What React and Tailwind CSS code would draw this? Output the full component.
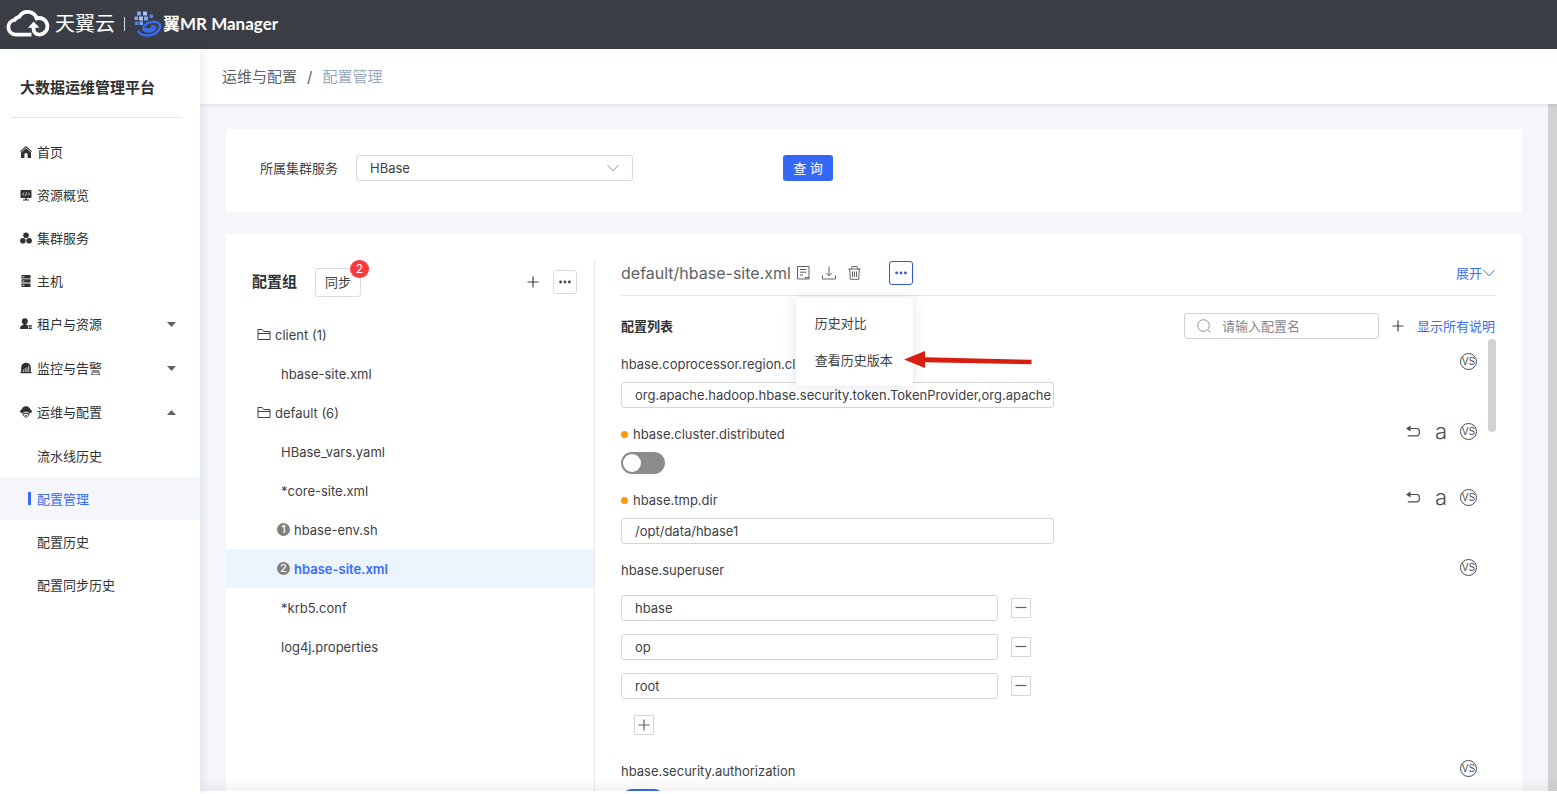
import React, { useState } from "react";
import clsx from "clsx";

const menu = [
  { id: "home", label: "首页", icon: HomeIcon },
  { id: "overview", label: "资源概览", icon: OverviewIcon },
  { id: "cluster", label: "集群服务", icon: ClusterIcon },
  { id: "host", label: "主机", icon: HostIcon },
  { id: "tenant", label: "租户与资源", icon: TenantIcon, children: [] },
  { id: "monitor", label: "监控与告警", icon: MonitorIcon, children: [] },
  {
    id: "ops",
    label: "运维与配置",
    icon: OpsIcon,
    open: true,
    children: ["流水线历史", "配置管理", "配置历史", "配置同步历史"],
  },
];

const groups = [
  { name: "client (1)", files: [{ name: "hbase-site.xml" }] },
  {
    name: "default (6)",
    files: [
      { name: "HBase_vars.yaml" },
      { name: "*core-site.xml" },
      { name: "hbase-env.sh", changes: 1 },
      { name: "hbase-site.xml", changes: 2, active: true },
      { name: "*krb5.conf" },
      { name: "log4j.properties" },
    ],
  },
];

function HomeIcon() {
  return (
    <svg width="12" height="12" viewBox="0 0 12 12" fill="currentColor">
      <path d="M6 0 0 5.2l.7.9L6 1.6l5.3 4.5.7-.9z" />
      <path d="M6 2.3 1 6.6V12h3.4V8.6a1.6 1.6 0 0 1 3.2 0V12H11V6.6z" />
    </svg>
  );
}

function OverviewIcon() {
  return (
    <svg width="12" height="12" viewBox="0 0 12 12" fill="currentColor">
      <rect x="0.5" y="1" width="11" height="8" rx="1" />
      <path d="M5.3 9h1.4v1.6H5.3zM3 10.4h6v1H3z" />
      <path
        d="M3.8 3.6 2.5 5l1.3 1.4M8.2 3.6 9.5 5 8.2 6.4M6.6 3.3 5.4 6.7"
        fill="none"
        stroke="#fff"
        strokeWidth="0.8"
      />
    </svg>
  );
}

function ClusterIcon() {
  return (
    <svg width="12" height="12" viewBox="0 0 12 12" fill="currentColor">
      <circle cx="6" cy="3.3" r="2.8" />
      <circle cx="2.9" cy="8.7" r="2.8" />
      <circle cx="9.1" cy="8.7" r="2.8" />
    </svg>
  );
}

function HostIcon() {
  return (
    <svg width="12" height="12" viewBox="0 0 12 12" fill="currentColor">
      <path d="M1.5 0h9v3.4h-9zM1.5 4.2h9v3.4h-9zM1.5 8.4h9V12h-9z" />
      <path d="M2.6 1.3h1.8v.9H2.6zM2.6 5.5h1.8v.9H2.6zM2.6 9.8h1.8v.9H2.6z" fill="#fff" />
    </svg>
  );
}

function TenantIcon() {
  return (
    <svg width="12" height="12" viewBox="0 0 12 12" fill="currentColor">
      <circle cx="4.8" cy="3.3" r="3" />
      <path d="M3.4 5h2.8v1.6L8 7.6V11H.2V9c0-1.2 3.2-1.6 3.2-2.4z" />
      <path d="M8.6 7.2h3.2v1.6H8.6zM8.6 9.4h3.2V11H8.6z" />
    </svg>
  );
}

function MonitorIcon() {
  return (
    <svg width="12" height="12" viewBox="0 0 12 12" fill="currentColor">
      <path d="M1.2 10V5.5a4.8 4.8 0 0 1 9.6 0V10h.8v1.2H.4V10z" />
      <path
        d="M3.6 10V7.5M5.3 10V6.3M7 10V5.3M8.7 10V3.8"
        fill="none"
        stroke="#fff"
        strokeWidth="0.7"
      />
    </svg>
  );
}

function OpsIcon() {
  return (
    <svg width="12" height="12" viewBox="0 0 12 12">
      <path
        d="M6 .3c2.5 0 4 1.5 4.3 3.2 1 .2 1.6.9 1.6 1.8S11.2 7 10.2 7H1.8C.8 7 .1 6.2.1 5.3s.6-1.6 1.6-1.8C2 1.8 3.5.3 6 .3z"
        fill="currentColor"
      />
      <path
        d="M2.8 6.2c0 3 1.2 5 3.2 5s3.2-2 3.2-5C8.2 4.9 3.8 4.9 2.8 6.2z"
        fill="#fff"
        stroke="currentColor"
        strokeWidth="0.9"
      />
      <path d="M3.3 6.8h5.4v1.4H7.2L6 7.5l-1.2.7H3.3zM4.8 9.3h2.4v.8H4.8z" fill="currentColor" />
    </svg>
  );
}

function CloudLogo() {
  return (
    <svg width="44" height="28" viewBox="0 0 44 28" fill="none" stroke="#fff" strokeWidth="3.8">
      <path d="M25.5 24.6H9.5A7.4 7.4 0 0 1 8.6 9.9 6.6 6.6 0 0 1 13.3 6.8 9.5 9.5 0 0 1 30.6 8.4 8.3 8.3 0 1 1 33.6 24.6c-3.6 0-6-2-6-5.3V17" />
      <path d="m22 17.8 5.7-6.3 5.7 6.3z" fill="#fff" stroke="none" />
    </svg>
  );
}

function WingLogo() {
  return (
    <svg width="28" height="26" viewBox="0 0 28 26">
      <g fill="#7ea6f8">
        <rect x="3" y="0.5" width="4" height="4" />
        <rect x="9" y="0.5" width="4" height="4" fill="#a9c4ff" />
        <rect x="0.5" y="5.5" width="3.5" height="3.5" />
        <rect x="5" y="5.5" width="4" height="4" fill="#a9c4ff" />
        <rect x="10" y="5.5" width="4" height="4" />
        <rect x="15.5" y="3.5" width="3.5" height="3.5" fill="#4f82f6" />
        <rect x="1" y="10.5" width="3.5" height="3.5" fill="#4f82f6" />
        <rect x="5.5" y="10.5" width="3.5" height="3.5" />
      </g>
      <g fill="none" stroke="#3a6cf3" strokeLinecap="round">
        <path
          d="M4.5 20.5c2.5 4.500 10.500 5.200 16 2.200 6-3.300 7.500-9 3-11.200-4.500-2.100-13 .5-14 5.200-.8 4 6 5 10 2.300 3-2 1.500-4.200-1.500-3.700"
          strokeWidth="2.4"
        />
        <path d="M12.5 18.2c1.500 1.200 4.500.6 5.500-1" strokeWidth="2.8" />
      </g>
    </svg>
  );
}

const ChevronDown = ({ size = 12, className }) => (
  <svg width={size} height={size} viewBox="0 0 12 12" fill="none" stroke="currentColor" className={className}>
    <path d="M.5 3 6 8.8 11.5 3" />
  </svg>
);

const Plus = () => (
  <svg width="12" height="12" viewBox="0 0 12 12" stroke="currentColor" strokeWidth="1.2">
    <path d="M6 .5v11M.5 6h11" />
  </svg>
);

const Minus = () => (
  <svg width="12" height="12" viewBox="0 0 12 12" stroke="currentColor" strokeWidth="1.2">
    <path d="M.5 5.5h11" />
  </svg>
);

const Dots = () => (
  <svg width="12" height="12" viewBox="0 0 12 12" fill="currentColor">
    <circle cx="1.6" cy="6" r="1.4" />
    <circle cx="6" cy="6" r="1.4" />
    <circle cx="10.4" cy="6" r="1.4" />
  </svg>
);

const FolderIcon = () => (
  <svg width="14" height="13" viewBox="0 0 14 13" fill="none" stroke="currentColor">
    <path d="M1 11.5v-10h4.2l1.5 2H13v8zM1 5.5h12" />
  </svg>
);

const NoteIcon = () => (
  <svg width="13" height="14" viewBox="0 0 13 14" fill="none" stroke="currentColor">
    <path d="M.5.5H12V13H.5zM8.500 13v-1.500H12M3 3.500h6.500M3 6.200h6.500M3 9h3" />
  </svg>
);

const DownloadIcon = () => (
  <svg width="14" height="14" viewBox="0 0 14 14" fill="none" stroke="currentColor">
    <path d="M7 .5v9M4 6.8l3 3 3-3M.5 9.5V13h13V9.5" />
  </svg>
);

const TrashIcon = () => (
  <svg width="13" height="14" viewBox="0 0 13 14" fill="none" stroke="currentColor">
    <path d="M.3 3h12.4M3.3 3l.8-2.5h4.8L9.7 3M1.7 3l.6 10.3h8.4L11.3 3M4.5 5.5V11M6.5 5.5V11M8.5 5.5V11" />
  </svg>
);

const UndoIcon = () => (
  <svg width="14" height="12" viewBox="0 0 14 12" fill="none" stroke="currentColor" strokeWidth="1.2">
    <path d="M2 3.5h8.8a2.5 2.5 0 0 1 2.5 2.5v2.3a2.5 2.5 0 0 1-2.5 2.5H1.8" />
    <path d="M0 3.4 4.5.4v6z" fill="currentColor" stroke="none" />
  </svg>
);

function Header() {
  return (
    <header className="flex h-[49px] shrink-0 items-center bg-[#3a3d46] pb-[2px] pl-[6px] text-white">
      <CloudLogo />
      <span className="ml-[5px] text-[20px] leading-6">天翼云</span>
      <span className="mx-[9px] h-3.5 w-px bg-gray-300" />
      <WingLogo />
      <span className="ml-px font-['Lato','Noto_Sans_CJK_SC',sans-serif] text-[17px] font-bold leading-6">
        翼MR Manager
      </span>
    </header>
  );
}

function Sidebar() {
  const [current, setCurrent] = useState("配置管理");

  return (
    <aside className="z-10 w-[200px] shrink-0 bg-white shadow-[2px_0_10px_rgba(30,50,90,0.1)]">
      <div className="ml-[11px] mr-[18px] border-b border-[#e4e7ed] pb-[17px] pl-[9px] pt-[27px] text-[15px] font-bold leading-6 text-[#303133]">
        大数据运维管理平台
      </div>
      <nav className="pt-3 text-[#303133]">
        <ul>
          {menu.map((item) => (
            <li key={item.id}>
              <a
                href={`#${item.id}`}
                className={clsx(
                  "flex items-center gap-[5px] pl-5 pr-6",
                  item.children ? "h-11" : "h-[43px]"
                )}
              >
                <item.icon />
                {item.label}
                {item.children && (
                  <svg width="9" height="5" viewBox="0 0 9 5" fill="#606266" className="ml-auto">
                    <path d={item.open ? "M4.5 0 9 5H0z" : "M0 0h9L4.5 5z"} />
                  </svg>
                )}
              </a>
              {item.open && (
                <ul>
                  {item.children.map((child) => (
                    <li key={child}>
                      <a
                        href="#ops"
                        onClick={() => setCurrent(child)}
                        className={clsx(
                          "flex h-[43px] items-center gap-[6px] pl-7",
                          child === current && "bg-[#f4f6f9] text-[#3a6cf3]"
                        )}
                      >
                        <span className={clsx("h-[13px] w-[3px]", child === current && "bg-[#3a6cf3]")} />
                        {child}
                      </a>
                    </li>
                  ))}
                </ul>
              )}
            </li>
          ))}
        </ul>
      </nav>
    </aside>
  );
}

function FilterCard() {
  return (
    <form className="flex shrink-0 items-center bg-white pb-[31px] pl-[34px] pt-[26px]">
      <label htmlFor="service" className="mr-[18px]">
        所属集群服务
      </label>
      <div className="relative w-[277px]">
        <select
          id="service"
          className="h-[26px] w-full appearance-none rounded-[3px] border border-[#d9dbe0] bg-white px-[13px] text-[#404144]"
        >
          <option>HBase</option>
        </select>
        <ChevronDown className="pointer-events-none absolute right-[14px] top-[7px] text-[#909399]" />
      </div>
      <button type="button" className="ml-[150px] h-[26px] w-[50px] rounded-[3px] bg-[#3568f5] text-white">
        查 询
      </button>
    </form>
  );
}

function GroupTree() {
  return (
    <section className="w-[369px] shrink-0 border-r border-[#e8eaee]">
      <div className="mb-[11px] flex h-11 items-center pl-[26px] pr-[17px]">
        <h2 className="text-[15px] font-bold text-[#303133]">配置组</h2>
        <button className="relative ml-[18px] h-[29px] w-[46px] rounded-[3px] border border-[#d9dbe0]">
          同步
          <span className="absolute -right-[9px] -top-[9px] h-[18px] w-[19px] rounded-full bg-[#fb3b3b] text-center text-[12px] leading-[18px] text-white">
            2
          </span>
        </button>
        <button aria-label="新增" className="ml-auto">
          <Plus />
        </button>
        <button
          aria-label="更多"
          className="ml-[14px] flex h-6 w-6 items-center justify-center rounded-[3px] border border-[#d9dbe0]"
        >
          <Dots />
        </button>
      </div>
      <ul>
        {groups.map((group) => (
          <li key={group.name}>
            <div className="flex h-[39px] items-center gap-1 pl-[31px]">
              <FolderIcon />
              {group.name}
            </div>
            <ul>
              {group.files.map((file) => (
                <li
                  key={file.name}
                  className={clsx(
                    "flex h-[39px] items-center gap-1",
                    file.changes ? "pl-[51px]" : "pl-[55px]",
                    file.active && "bg-[#ecf5fe] font-semibold text-[#3a6cf3]"
                  )}
                >
                  {file.changes && (
                    <span className="h-[13px] w-[13px] rounded-full bg-[#808080] text-center text-[11px] font-medium leading-[13px] text-white">
                      {file.changes}
                    </span>
                  )}
                  {file.name}
                </li>
              ))}
            </ul>
          </li>
        ))}
      </ul>
    </section>
  );
}

function MoreMenu() {
  const [open, setOpen] = useState(true);

  return (
    <div className="relative ml-7">
      <button
        aria-label="更多操作"
        onClick={() => setOpen(!open)}
        className="flex h-6 w-6 items-center justify-center rounded-[3px] border border-[#3058d0] text-[#3058d0]"
      >
        <Dots />
      </button>
      {open && (
        <div className="absolute right-0 top-[37px] z-10 w-[117px] rounded-[3px] bg-white py-[7px] text-[#404144] shadow-[0_0_14px_rgba(40,60,110,0.15)]">
          <button className="block h-[37px] w-full pl-[19px] text-left">历史对比</button>
          <button className="block h-[37px] w-full pl-[19px] text-left">查看历史版本</button>
          <svg
            width="128"
            height="18"
            viewBox="0 0 128 18"
            fill="#d81e10"
            className="absolute left-[108px] top-[53px]"
          >
            <path d="M0 8.5 21 0v6.3l106.5 2.5v4.4L21 11.3V17z" />
          </svg>
        </div>
      )}
    </div>
  );
}

function ConfigItem({ id, name, changed, children }) {
  return (
    <div className="mb-[14px]">
      <div className="mb-[6px] flex h-6 items-start">
        <label htmlFor={id} className="flex items-center gap-[5px] leading-6">
          {changed && <span className="h-[7px] w-[7px] rounded-full bg-[#fb9a05]" />}
          {name}
        </label>
        <div className="ml-auto flex h-[18px] items-center text-[#4a4c50]">
          {changed && (
            <>
              <button aria-label="撤销" className="mr-[15px]">
                <UndoIcon />
              </button>
              <button className="mr-[13px] text-[22px] font-light leading-[18px]">a</button>
            </>
          )}
          <button className="flex h-[17px] w-[17px] items-center justify-center rounded-full border border-[#4a4c50] text-[10px] leading-none">
            VS
          </button>
        </div>
      </div>
      {children}
    </div>
  );
}

const TextInput = (props) => (
  <input
    type="text"
    className="block h-[26px] w-full rounded-[3px] border border-[#d4d6da] pl-[13px] text-[#404144]"
    {...props}
  />
);

const Switch = ({ id, defaultChecked }) => (
  <span className="relative block h-[22px] w-11">
    <input
      id={id}
      type="checkbox"
      defaultChecked={defaultChecked}
      className="peer block h-full w-full appearance-none rounded-full bg-[#8c8c8c] checked:bg-[#3568f5]"
    />
    <span className="pointer-events-none absolute left-[2px] top-[2px] h-[18px] w-[18px] rounded-full bg-white peer-checked:left-6" />
  </span>
);

const SquareButton = ({ label, children }) => (
  <button
    aria-label={label}
    className="flex h-5 w-5 shrink-0 items-center justify-center border border-[#d4d6da] text-[#606266]"
  >
    {children}
  </button>
);

function ConfigPanel() {
  return (
    <section className="flex min-w-0 flex-1 flex-col px-[26px]">
      <div className="flex h-9 shrink-0 items-center border-b border-[#e4e7ed] pb-[10px] text-[#606266]">
        <h2 className="mr-[6px] text-[16px]">default/hbase-site.xml</h2>
        <div className="flex items-center gap-3">
          <button aria-label="备注">
            <NoteIcon />
          </button>
          <button aria-label="下载">
            <DownloadIcon />
          </button>
          <button aria-label="删除">
            <TrashIcon />
          </button>
        </div>
        <MoreMenu />
        <button className="ml-auto flex items-center gap-px pr-px text-[#3a6cf3]">
          展开
          <ChevronDown />
        </button>
      </div>

      <div className="mt-[17px] flex shrink-0 items-center pr-px">
        <h3 className="font-bold text-[#303133]">配置列表</h3>
        <div className="relative ml-auto w-[195px]">
          <svg
            width="14"
            height="14"
            viewBox="0 0 14 14"
            fill="none"
            stroke="#909399"
            className="absolute left-[13px] top-[6px]"
          >
            <circle cx="6.5" cy="6.5" r="5.8" />
            <path d="m10.6 10.6 2.7 2.7" />
          </svg>
          <input
            type="text"
            aria-label="请输入配置名"
            placeholder="请输入配置名"
            className="block h-[26px] w-full rounded-[3px] border border-[#cfd2d7] pl-[37px] pr-2 placeholder:text-[#85888f]"
          />
        </div>
        <button aria-label="添加配置" className="mx-[13px]">
          <Plus />
        </button>
        <a href="#desc" className="text-[#3a6cf3]">
          显示所有说明
        </a>
      </div>

      <div className="flex min-h-0 flex-1">
        <div className="min-w-0 flex-1 overflow-hidden pr-[11px] pt-[13px]">
          <ConfigItem id="region" name="hbase.coprocessor.region.classes">
            <div className="w-[433px]">
              <TextInput
                id="region"
                defaultValue="org.apache.hadoop.hbase.security.token.TokenProvider,org.apache"
              />
            </div>
          </ConfigItem>
          <ConfigItem id="distributed" name="hbase.cluster.distributed" changed>
            <Switch id="distributed" />
          </ConfigItem>
          <ConfigItem id="tmpdir" name="hbase.tmp.dir" changed>
            <div className="w-[433px]">
              <TextInput id="tmpdir" defaultValue="/opt/data/hbase1" />
            </div>
          </ConfigItem>
          <ConfigItem id="superuser-0" name="hbase.superuser">
            <div className="flex flex-col gap-[13px] py-[7px]">
              {["hbase", "op", "root"].map((user, i) => (
                <div key={user} className="flex items-center gap-[13px]">
                  <div className="w-[377px]">
                    <TextInput id={`superuser-${i}`} aria-label={user} defaultValue={user} />
                  </div>
                  <SquareButton label="移除">
                    <Minus />
                  </SquareButton>
                </div>
              ))}
              <div className="flex h-[26px] items-center pl-[13px]">
                <SquareButton label="添加">
                  <Plus />
                </SquareButton>
              </div>
            </div>
          </ConfigItem>
          <ConfigItem id="authorization" name="hbase.security.authorization">
            <Switch id="authorization" defaultChecked />
          </ConfigItem>
        </div>
        <div className="h-[93px] w-2 rounded-full bg-[#d2d2d2]" />
      </div>
    </section>
  );
}

export default function App() {
  return (
    <div className="flex h-screen flex-col overflow-hidden bg-white font-['Inter','Noto_Sans_CJK_SC',sans-serif] text-[13px] leading-5 text-[#404144]">
      <Header />
      <div className="flex min-h-0 flex-1">
        <Sidebar />
        <div className="flex min-w-0 flex-1 flex-col">
          <nav className="z-[5] flex h-[55px] shrink-0 items-center gap-[10px] bg-white pl-[22px] text-[15px] text-[#606266] shadow-[0_1px_4px_rgba(0,21,41,0.1)]">
            <a href="#ops">运维与配置</a>
            <span>/</span>
            <span className="text-[#97a8be]">配置管理</span>
          </nav>
          <main className="flex min-h-0 flex-1 bg-[#f4f6f9]">
            <div className="flex min-w-0 flex-1 flex-col gap-[22px] px-[26px] pt-[25px]">
              <FilterCard />
              <div className="flex min-h-0 flex-1 bg-white pt-[26px]">
                <GroupTree />
                <ConfigPanel />
              </div>
            </div>
            <div className="w-[9px] shrink-0 bg-[#d2d2d2]" />
          </main>
          <footer className="z-[5] h-[3px] shrink-0 bg-white shadow-[0_-2px_12px_rgba(0,21,41,0.2)]" />
        </div>
      </div>
    </div>
  );
}
